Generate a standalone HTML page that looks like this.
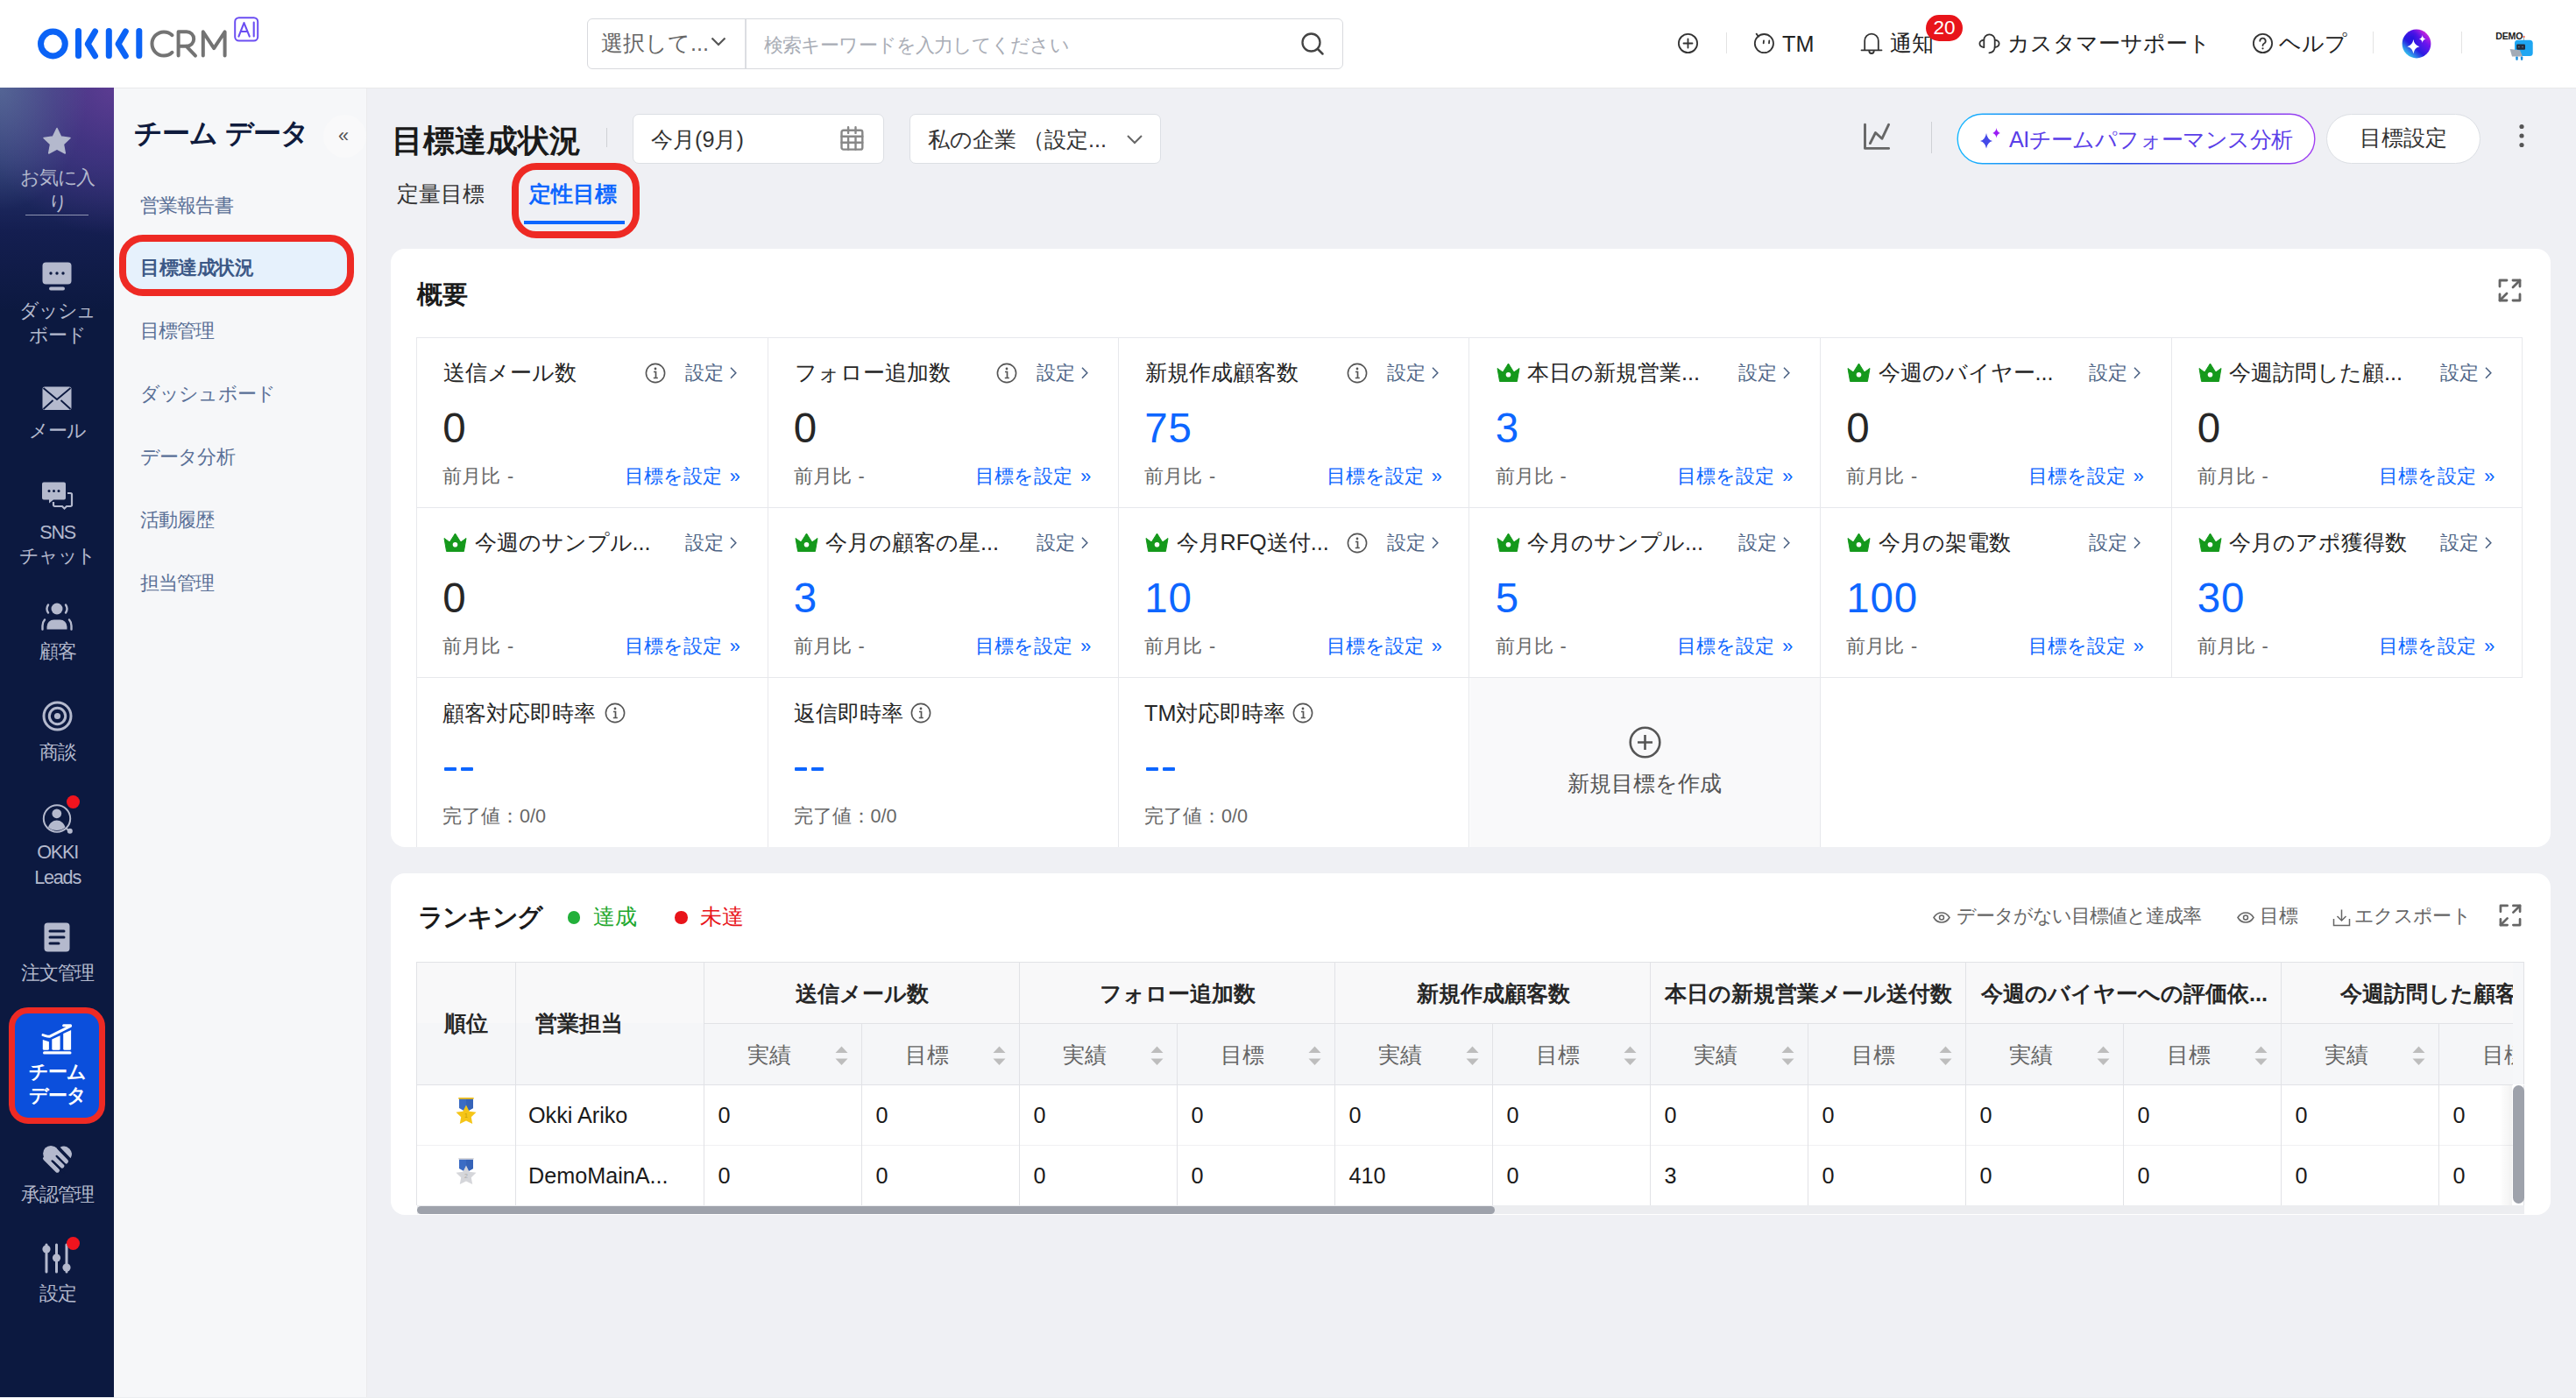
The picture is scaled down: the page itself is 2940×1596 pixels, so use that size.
<!DOCTYPE html><html><head><meta charset="utf-8"><style>
*{box-sizing:border-box;margin:0;padding:0}
html,body{width:2940px;height:1596px;overflow:hidden;background:#eff0f4;font-family:"Liberation Sans",sans-serif;color:#222}
.a{position:absolute;white-space:nowrap}
svg.a{overflow:visible}
</style></head><body>
<div class="a" style="left:0;top:0;width:2940px;height:100px;background:#fff"></div>
<svg class="a" style="left:0;top:0" width="320" height="100" viewBox="0 0 320 100">
<g fill="none" stroke="#0b63f6" stroke-width="7" stroke-linecap="round" stroke-linejoin="round">
<circle cx="60.4" cy="50" r="13.9"/>
<path d="M89.5 35.5v28"/><path d="M108.5 36l-8.3 14.2 8.3 13.6"/>
<path d="M124.3 35.5v28"/><path d="M143.3 36l-8.3 14.2 8.3 13.6"/>
<path d="M158.8 35.5v28"/>
</g>
<g fill="none" stroke="#737373" stroke-width="4" stroke-linecap="round" stroke-linejoin="round">
<path d="M196.5 40.2A13.6 13.6 0 1 0 196.5 59.8"/>
<path d="M203.6 63.6V36.3h9.4a8.2 8.2 0 0 1 0 16.4h-9.4M212.5 52.7l10.5 10.9"/>
<path d="M231.8 63.6V36.3l12.4 18.8 12.4-18.8v27.3"/>
</g>
<rect x="268.2" y="20.2" width="26" height="26.3" rx="4.5" fill="none" stroke="#6b4ef2" stroke-width="2"/>
<path d="M272.4 41.6l6.1-15.5 6.3 15.5M274.6 36h7.8M289.7 25.6v15.8" fill="none" stroke="#6b4ef2" stroke-width="2.1" stroke-linecap="round" stroke-linejoin="round"/>
</svg>
<div class="a" style="left:670px;top:21px;width:863px;height:58px;border:1.5px solid #d8dade;border-radius:6px;background:#fff"></div>
<div class="a" style="left:850px;top:22px;width:1.5px;height:56px;background:#dcdee2"></div>
<div class="a" style="left:686.0px;top:37.0px;font-size:25.2px;line-height:25.2px;color:#666;font-weight:normal;">選択して...</div>
<svg class="a" style="left:810px;top:40px" width="20" height="14" viewBox="0 0 20 14"><path d="M2.5 3.5l7.5 7.5 7.5-7.5" fill="none" stroke="#555" stroke-width="2.2"/></svg>
<div class="a" style="left:872.0px;top:41.0px;font-size:21.6px;line-height:21.6px;color:#a9adb6;font-weight:normal;letter-spacing:-0.9px">検索キーワードを入力してください</div>
<svg class="a" style="left:1484px;top:36px" width="28" height="28" viewBox="0 0 28 28"><circle cx="12.5" cy="12.5" r="10" fill="none" stroke="#444" stroke-width="2.3"/><path d="M20 20l5.5 5.5" stroke="#444" stroke-width="2.5" stroke-linecap="round"/></svg>
<svg class="a" style="left:1914px;top:37px" width="25" height="25" viewBox="0 0 25 25"><circle cx="12.5" cy="12.5" r="10.6" fill="none" stroke="#333" stroke-width="1.8" stroke-linecap="round" stroke-linejoin="round"/><path d="M12.5 7.5v10M7.5 12.5h10" fill="none" stroke="#333" stroke-width="1.8" stroke-linecap="round" stroke-linejoin="round" stroke-width="2"/></svg>
<div class="a" style="left:1970px;top:37px;width:1px;height:24px;background:#e3e3e3"></div>
<svg class="a" style="left:2001px;top:37px" width="25" height="25" viewBox="0 0 25 25"><circle cx="12.4" cy="12.6" r="10.6" fill="none" stroke="#333" stroke-width="1.8" stroke-linecap="round" stroke-linejoin="round"/><path d="M3.6 1.6l2.4 3.2" fill="none" stroke="#333" stroke-width="1.8" stroke-linecap="round" stroke-linejoin="round"/><path d="M12 9.4l-.3 3M18.3 9.4l-.3 3" fill="none" stroke="#333" stroke-width="1.8" stroke-linecap="round" stroke-linejoin="round" stroke-width="2"/></svg>
<div class="a" style="left:2034.0px;top:38.0px;font-size:25.2px;line-height:25.2px;color:#222;font-weight:normal;">TM</div>
<svg class="a" style="left:2123px;top:37px" width="26" height="25" viewBox="0 0 26 25"><path d="M5.2 20V9.4a7.8 7.8 0 0 1 15.6 0V20M1.5 20.3h23M10.3 21.3a2.7 2.7 0 0 0 5.4 0" fill="none" stroke="#333" stroke-width="1.8" stroke-linecap="round" stroke-linejoin="round"/></svg>
<div class="a" style="left:2156.5px;top:37.0px;font-size:25.2px;line-height:25.2px;color:#222;font-weight:normal;">通知</div>
<div class="a" style="left:2198px;top:17px;width:42px;height:30px;border-radius:15px;background:#e8141a;color:#fff;font-size:22.5px;line-height:30px;text-align:center">20</div>
<svg class="a" style="left:2258px;top:37px" width="25" height="25" viewBox="0 0 25 25"><path d="M6.3 17V8.5a6.2 6.2 0 0 1 12.4 0V16c0 4.2-2.4 6.9-6.3 7.3" fill="none" stroke="#333" stroke-width="1.8" stroke-linecap="round" stroke-linejoin="round"/><path d="M6.3 8.6C3.2 9 1.4 10.8 1.4 12.8s1.8 3.9 4.9 4.3" fill="none" stroke="#333" stroke-width="1.8" stroke-linecap="round" stroke-linejoin="round"/><path d="M18.7 8.6c3.1.4 4.9 2.2 4.9 4.2s-1.8 3.9-4.9 4.3" fill="none" stroke="#333" stroke-width="1.8" stroke-linecap="round" stroke-linejoin="round"/></svg>
<div class="a" style="left:2291.0px;top:37.0px;font-size:25.2px;line-height:25.2px;color:#222;font-weight:normal;">カスタマーサポート</div>
<svg class="a" style="left:2570px;top:37px" width="25" height="25" viewBox="0 0 25 25"><circle cx="12.5" cy="12.5" r="10.6" fill="none" stroke="#333" stroke-width="1.8" stroke-linecap="round" stroke-linejoin="round"/><path d="M9.3 9.8a3.2 3.2 0 1 1 4.6 2.9c-1 .5-1.4 1.2-1.4 2.3" fill="none" stroke="#333" stroke-width="1.8" stroke-linecap="round" stroke-linejoin="round"/><circle cx="12.5" cy="18.3" r="1.1" fill="#333"/></svg>
<div class="a" style="left:2601.0px;top:37.0px;font-size:25.2px;line-height:25.2px;color:#222;font-weight:normal;">ヘルプ</div>
<div class="a" style="left:2708px;top:36px;width:1px;height:25px;background:#e3e3e3"></div>
<svg class="a" style="left:2741px;top:33px" width="34" height="34" viewBox="0 0 34 34"><defs>
<linearGradient id="gai" x1="0.15" y1="0.95" x2="0.9" y2="0.1"><stop offset="0" stop-color="#34e0f0"/><stop offset=".38" stop-color="#2a1ee2"/><stop offset=".7" stop-color="#6a14ee"/><stop offset="1" stop-color="#d828d6"/></linearGradient>
<radialGradient id="gai2" cx="0.35" cy="0.3" r="0.4"><stop offset="0" stop-color="#1a10d8" stop-opacity=".7"/><stop offset="1" stop-color="#1a10d8" stop-opacity="0"/></radialGradient></defs>
<circle cx="17" cy="17" r="16.4" fill="url(#gai)"/><circle cx="17" cy="17" r="16.4" fill="url(#gai2)"/>
<path d="M13.4 12.1Q14.3 18.6 20.4 20.2Q14.3 21.8 13.4 28.3Q12.5 21.8 6.4 20.2Q12.5 18.6 13.4 12.1Z" fill="#fff"/>
<path d="M23.7 7Q24.2 10.6 27.5 11.5Q24.2 12.4 23.7 16Q23.2 12.4 19.9 11.5Q23.2 10.6 23.7 7Z" fill="#fff"/>
</svg>
<div class="a" style="left:2809px;top:36px;width:1px;height:25px;background:#e3e3e3"></div>
<svg class="a" style="left:2846px;top:35px" width="48" height="36" viewBox="0 0 48 36">
<text x="2.3" y="10" font-family="Liberation Sans" font-weight="bold" font-size="10.6" letter-spacing="-0.2" fill="#1a1a1a">DEMO</text>
<path d="M34.5 7v4" stroke="#9aa" stroke-width="0.9"/><circle cx="34.5" cy="6.9" r="1.2" fill="#f07050"/>
<rect x="24" y="10.8" width="20.7" height="18.2" rx="3.5" fill="#1ea6f2"/>
<rect x="26.2" y="15.4" width="9.8" height="6.3" rx="1.2" fill="#232b3a"/>
<rect x="28" y="17.8" width="1.6" height="1.4" fill="#6b7686"/><rect x="32.2" y="17.8" width="1.6" height="1.4" fill="#6b7686"/>
<path d="M18.6 21l11.4 1.2 3 7.4H21z" fill="#a3abb6"/>
<rect x="25.3" y="29.4" width="2.4" height="4.4" rx="0.8" fill="#1a8fe0"/><rect x="30.9" y="29.4" width="2.4" height="4.4" rx="0.8" fill="#1a8fe0"/>
</svg>
<div class="a" style="left:0;top:100px;width:130px;height:1496px;background:#0c1940;overflow:hidden"><div style="position:absolute;left:0;top:0;width:130px;height:300px;background:linear-gradient(180deg,#34407c 0%,#26336d 28%,#141e50 55%,rgba(12,25,64,0) 85%)"></div><div style="position:absolute;left:0;top:0;width:130px;height:320px;background:radial-gradient(ellipse 170px 175px at 135px -5px,rgba(96,60,148,.95) 0%,rgba(78,50,138,.65) 45%,rgba(60,40,120,0) 100%)"></div><div style="position:absolute;left:0;top:0;width:130px;height:200px;background:radial-gradient(ellipse 100px 140px at 0px 0px,rgba(95,118,158,.7) 0%,rgba(95,118,158,0) 100%)"></div></div>
<svg class="a" style="left:48px;top:145px" width="34" height="34" viewBox="0 0 34 34"><path d="M17 1.5l4.6 9.6 10.4 1.3-7.6 7.2 1.9 10.4L17 25 7.7 30l1.9-10.4L2 12.4l10.4-1.3z" fill="#b4b9cd" stroke="#b4b9cd" stroke-width="1.5" stroke-linejoin="round"/></svg>
<div class="a" style="left:0;top:192.0px;width:130px;text-align:center;font-size:21.6px;line-height:21.6px;color:#b4b9cd;font-weight:normal;letter-spacing:-1.2px;padding-left:1.2px">お気に入</div>
<div class="a" style="left:0;top:221.0px;width:130px;text-align:center;font-size:21.6px;line-height:21.6px;color:#b4b9cd;font-weight:normal;letter-spacing:-1.2px;padding-left:1.2px">り</div>
<div class="a" style="left:29px;top:245px;width:72px;height:1px;background:rgba(180,185,205,.75)"></div>
<svg class="a" style="left:48px;top:299px" width="34" height="34" viewBox="0 0 34 34"><rect x="0.5" y="0.5" width="33" height="25" rx="4" fill="#b4b9cd"/><rect x="8" y="28.5" width="18" height="4" rx="2" fill="#b4b9cd"/><circle cx="10" cy="13" r="1.7" fill="#0c1940"/><circle cx="17" cy="13" r="1.7" fill="#0c1940"/><circle cx="24" cy="13" r="1.7" fill="#0c1940"/></svg>
<div class="a" style="left:0;top:344.0px;width:130px;text-align:center;font-size:21.6px;line-height:21.6px;color:#b4b9cd;font-weight:normal;letter-spacing:-1.2px;padding-left:1.2px">ダッシュ</div>
<div class="a" style="left:0;top:372.0px;width:130px;text-align:center;font-size:21.6px;line-height:21.6px;color:#b4b9cd;font-weight:normal;letter-spacing:-1.2px;padding-left:1.2px">ボード</div>
<svg class="a" style="left:48px;top:441px" width="34" height="28" viewBox="0 0 34 28"><rect x="0.5" y="0.5" width="33" height="26.5" rx="2.5" fill="#b4b9cd"/><path d="M1.5 2l15.5 13 15.5-13M1.5 26l11-10M32.5 26l-11-10" fill="none" stroke="#0c1940" stroke-width="1.8"/></svg>
<div class="a" style="left:0;top:481.0px;width:130px;text-align:center;font-size:21.6px;line-height:21.6px;color:#b4b9cd;font-weight:normal;letter-spacing:-1.2px;padding-left:1.2px">メール</div>
<svg class="a" style="left:48px;top:550px" width="35" height="32" viewBox="0 0 35 32"><path d="M2 0.5h23a2 2 0 0 1 2 2v16a2 2 0 0 1-2 2H13l-5 4v-4H2a2 2 0 0 1-2-2v-16a2 2 0 0 1 2-2z" fill="#b4b9cd"/><circle cx="8" cy="10.5" r="1.5" fill="#0c1940"/><circle cx="13.5" cy="10.5" r="1.5" fill="#0c1940"/><circle cx="19" cy="10.5" r="1.5" fill="#0c1940"/><path d="M29 13h3.5a1.5 1.5 0 0 1 1.5 1.5v12a1.5 1.5 0 0 1-1.5 1.5H28l-2.5 2.5L23 28h-8.5a1.5 1.5 0 0 1-1.5-1.5V23" fill="none" stroke="#b4b9cd" stroke-width="2.2"/></svg>
<div class="a" style="left:0;top:597.0px;width:130px;text-align:center;font-size:21.6px;line-height:21.6px;color:#b4b9cd;font-weight:normal;letter-spacing:-1.2px;padding-left:1.2px">SNS</div>
<div class="a" style="left:0;top:624.0px;width:130px;text-align:center;font-size:21.6px;line-height:21.6px;color:#b4b9cd;font-weight:normal;letter-spacing:-1.2px;padding-left:1.2px">チャット</div>
<svg class="a" style="left:48px;top:687px" width="34" height="33" viewBox="0 0 34 33"><circle cx="17" cy="8" r="6.5" fill="#b4b9cd"/><path d="M5.5 31.5v-3a8 8 0 0 1 8-8h7a8 8 0 0 1 8 8v3z" fill="#b4b9cd"/><path d="M7 3.5a8 8 0 0 0 0 9M27 3.5a8 8 0 0 1 0 9M3 20.5a10 10 0 0 0-2.5 7v4M31 20.5a10 10 0 0 1 2.5 7v4" fill="none" stroke="#b4b9cd" stroke-width="2.4" stroke-linecap="round"/></svg>
<div class="a" style="left:0;top:732.5px;width:130px;text-align:center;font-size:21.6px;line-height:21.6px;color:#b4b9cd;font-weight:normal;letter-spacing:-1.2px;padding-left:1.2px">顧客</div>
<svg class="a" style="left:48px;top:800px" width="35" height="35" viewBox="0 0 35 35"><circle cx="17.5" cy="17.5" r="15.5" fill="none" stroke="#b4b9cd" stroke-width="3"/><circle cx="17.5" cy="17.5" r="9.2" fill="none" stroke="#b4b9cd" stroke-width="3"/><circle cx="17.5" cy="17.5" r="3.6" fill="#b4b9cd"/></svg>
<div class="a" style="left:0;top:848.0px;width:130px;text-align:center;font-size:21.6px;line-height:21.6px;color:#b4b9cd;font-weight:normal;letter-spacing:-1.2px;padding-left:1.2px">商談</div>
<svg class="a" style="left:47px;top:916px" width="40" height="40" viewBox="0 0 40 40"><circle cx="18" cy="18.5" r="15.2" fill="none" stroke="#b4b9cd" stroke-width="2"/><circle cx="17.8" cy="12.8" r="5.4" fill="#b4b9cd"/><path d="M8 28.5c1.5-5 5.5-8 9.8-8s8.3 3 9.8 8a15.2 15.2 0 0 1-19.6 0z" fill="#b4b9cd"/><path d="M28.5 29.5l3 3" stroke="#b4b9cd" stroke-width="2"/><circle cx="32.8" cy="32.7" r="3" fill="#b4b9cd"/></svg>
<div class="a" style="left:76px;top:908px;width:15px;height:15px;border-radius:50%;background:#f0141e"></div>
<div class="a" style="left:0;top:962.0px;width:130px;text-align:center;font-size:21.6px;line-height:21.6px;color:#b4b9cd;font-weight:normal;letter-spacing:-1.2px;padding-left:1.2px">OKKI</div>
<div class="a" style="left:0;top:991.0px;width:130px;text-align:center;font-size:21.6px;line-height:21.6px;color:#b4b9cd;font-weight:normal;letter-spacing:-1.2px;padding-left:1.2px">Leads</div>
<svg class="a" style="left:50px;top:1053px" width="30" height="34" viewBox="0 0 30 34"><rect x="0.5" y="0.5" width="29" height="33" rx="4" fill="#b4b9cd"/><path d="M7 10h16M7 17h16M7 24h10" stroke="#0c1940" stroke-width="3" stroke-linecap="round"/></svg>
<div class="a" style="left:0;top:1100.0px;width:130px;text-align:center;font-size:21.6px;line-height:21.6px;color:#b4b9cd;font-weight:normal;letter-spacing:-1.2px;padding-left:1.2px">注文管理</div>
<div class="a" style="left:10px;top:1150px;width:110px;height:133px;border:7.5px solid #ee2a24;border-radius:22px;background:#0b4fdc"></div>
<svg class="a" style="left:47px;top:1169px" width="36" height="36" viewBox="0 0 36 36"><rect x="2" y="31.3" width="32.5" height="3.2" rx="1.6" fill="#fff"/><path d="M1.8 18L8.9 20.3V28.3a1.5 1.5 0 0 1-1.5 1.5H3.3a1.5 1.5 0 0 1-1.5-1.5z" fill="#fff"/><path d="M12.3 17.5L21.6 13.2V28.3a1.5 1.5 0 0 1-1.5 1.5H13.8a1.5 1.5 0 0 1-1.5-1.5z" fill="#fff"/><path d="M25.2 11L34.1 7V28.3a1.5 1.5 0 0 1-1.5 1.5H26.7a1.5 1.5 0 0 1-1.5-1.5z" fill="#fff"/><path d="M2 12.6C4.5 13.2 7.5 14.8 10 14.2L33.6 2.3M25.6 1.7H33.6" fill="none" stroke="#fff" stroke-width="3" stroke-linecap="round" stroke-linejoin="round"/></svg>
<div class="a" style="left:0;top:1213.0px;width:130px;text-align:center;font-size:21.6px;line-height:21.6px;color:#fff;font-weight:bold;letter-spacing:-1.2px;padding-left:1.2px">チーム</div>
<div class="a" style="left:0;top:1240.0px;width:130px;text-align:center;font-size:21.6px;line-height:21.6px;color:#fff;font-weight:bold;letter-spacing:-1.2px;padding-left:1.2px">データ</div>
<svg class="a" style="left:40px;top:1300px" width="50" height="45" viewBox="0 0 50 45"><circle cx="18" cy="16.9" r="8.9" fill="#b4b9cd"/><path d="M11.6 22.5L25.4 36.1M16.8 17.3L30.9 30.9M22 12.1L35.4 25.9" stroke="#b4b9cd" stroke-width="5.2" stroke-linecap="round"/><path d="M19.6 25.3L33 38.7M24.6 19.9L38 33.3" stroke="#0c1940" stroke-width="2.2" stroke-linecap="round"/><path d="M28.6 9.8A9 9 0 0 1 40.6 22.2Z" fill="#b4b9cd"/></svg>
<div class="a" style="left:0;top:1352.5px;width:130px;text-align:center;font-size:21.6px;line-height:21.6px;color:#b4b9cd;font-weight:normal;letter-spacing:-1.2px;padding-left:1.2px">承認管理</div>
<svg class="a" style="left:47px;top:1418px" width="34" height="37" viewBox="0 0 34 37"><path d="M6 3v31M17.5 3v31M29 3v31" stroke="#b4b9cd" stroke-width="3" stroke-linecap="round"/><circle cx="6" cy="8" r="4.6" fill="#b4b9cd"/><circle cx="17.5" cy="18" r="4.6" fill="#b4b9cd"/><circle cx="29" cy="29" r="4.6" fill="#b4b9cd"/></svg>
<div class="a" style="left:76px;top:1412px;width:15px;height:15px;border-radius:50%;background:#f0141e"></div>
<div class="a" style="left:0;top:1465.5px;width:130px;text-align:center;font-size:21.6px;line-height:21.6px;color:#b4b9cd;font-weight:normal;letter-spacing:-1.2px;padding-left:1.2px">設定</div>
<div class="a" style="left:130px;top:100px;width:289px;height:1496px;background:#f6f7f9;border-right:1px solid #ebebec"></div>
<div class="a" style="left:152.5px;top:136.0px;font-size:32.4px;line-height:32.4px;color:#0f1b3d;font-weight:bold;letter-spacing:-0.7px">チーム データ</div>
<div class="a" style="left:369px;top:131px;width:49px;height:49px;border-radius:50%;background:#f9f9fa"></div>
<div class="a" style="left:386.0px;top:143.0px;font-size:21.6px;line-height:21.6px;color:#555;font-weight:normal;line-height:24px">«</div>
<div class="a" style="left:136px;top:268px;width:267.5px;height:70px;border:8px solid #ee2a24;border-radius:27px;background:#e6f1fc"></div>
<div class="a" style="left:160.0px;top:223.6px;font-size:21.6px;line-height:21.6px;color:#5a7097;font-weight:normal;letter-spacing:-0.85px">営業報告書</div>
<div class="a" style="left:160.0px;top:295.2px;font-size:21.6px;line-height:21.6px;color:#3c5886;font-weight:bold;letter-spacing:-0.5px">目標達成状況</div>
<div class="a" style="left:160.0px;top:367.2px;font-size:21.6px;line-height:21.6px;color:#5a7097;font-weight:normal;letter-spacing:-0.85px">目標管理</div>
<div class="a" style="left:160.0px;top:439.2px;font-size:21.6px;line-height:21.6px;color:#5a7097;font-weight:normal;letter-spacing:-0.85px">ダッシュボード</div>
<div class="a" style="left:160.0px;top:511.2px;font-size:21.6px;line-height:21.6px;color:#5a7097;font-weight:normal;letter-spacing:-0.85px">データ分析</div>
<div class="a" style="left:160.0px;top:583.2px;font-size:21.6px;line-height:21.6px;color:#5a7097;font-weight:normal;letter-spacing:-0.85px">活動履歴</div>
<div class="a" style="left:160.0px;top:655.2px;font-size:21.6px;line-height:21.6px;color:#5a7097;font-weight:normal;letter-spacing:-0.85px">担当管理</div>
<div class="a" style="left:446.5px;top:142.5px;font-size:36px;line-height:36px;color:#1a1a1a;font-weight:bold;">目標達成状況</div>
<div class="a" style="left:692px;top:146px;width:1px;height:22px;background:#cfd1d5"></div>
<div class="a" style="left:721.5px;top:130px;width:287px;height:56.5px;border:1.5px solid #dcdfe4;border-radius:7px;background:#fff"></div>
<div class="a" style="left:743.0px;top:147.0px;font-size:25.2px;line-height:25.2px;color:#333;font-weight:normal;">今月(9月)</div>
<svg class="a" style="left:957px;top:144px" width="29" height="29" viewBox="0 0 29 29"><rect x="3.5" y="4.7" width="23.8" height="21.9" rx="2.2" fill="none" stroke="#888" stroke-width="2.4"/><path d="M3.5 11.7h23.8M3.5 18.8h23.8M11.1 11.7v14.9M19.5 11.7v14.9M11.1 1.2v6.7M19.5 1.2v6.7" stroke="#888" stroke-width="2.4" stroke-linecap="round"/></svg>
<div class="a" style="left:1038px;top:130px;width:287px;height:56.5px;border:1.5px solid #dcdfe4;border-radius:7px;background:#fff"></div>
<div class="a" style="left:1059.0px;top:147.0px;font-size:25.2px;line-height:25.2px;color:#333;font-weight:normal;">私の企業 （設定...</div>
<svg class="a" style="left:1285px;top:152px" width="20" height="14" viewBox="0 0 20 14"><path d="M2 3l8 8 8-8" fill="none" stroke="#666" stroke-width="2"/></svg>
<div class="a" style="left:453.0px;top:209.0px;font-size:25.2px;line-height:25.2px;color:#333;font-weight:normal;">定量目標</div>
<div class="a" style="left:604.0px;top:208.5px;font-size:25.2px;line-height:25.2px;color:#0d66ff;font-weight:bold;">定性目標</div>
<div class="a" style="left:598px;top:252px;width:115px;height:4px;background:#0d66ff"></div>
<div class="a" style="left:584px;top:186px;width:146px;height:86px;border:8px solid #ee2a24;border-radius:28px"></div>
<svg class="a" style="left:2126px;top:140px" width="32" height="32" viewBox="0 0 32 32"><g fill="none" stroke="#666" stroke-width="2.9" stroke-linecap="round" stroke-linejoin="round"><path d="M2.5 2.2V29.4H29.6"/><path d="M8.4 23.6L14.5 11.5L21.9 18.3L29.6 2.2"/></g></svg>
<div class="a" style="left:2204px;top:139px;width:1px;height:36px;background:#cfd1d5"></div>
<svg class="a" style="left:2233px;top:129px" width="410" height="59" viewBox="0 0 410 59"><defs><linearGradient id="gb" x1="0" y1="0" x2="1" y2="0"><stop offset="0" stop-color="#18b8ff"/><stop offset=".45" stop-color="#1f48e6"/><stop offset="1" stop-color="#a23ff2"/></linearGradient></defs>
<rect x="1.2" y="1.2" width="407.6" height="56.6" rx="28.3" fill="#fff" stroke="url(#gb)" stroke-width="1.4"/>
<path d="M34 23Q35.2 30.5 41 32Q35.2 33.5 34 40.6Q32.8 33.5 27 32Q32.8 30.5 34 23Z" fill="#4449e8"/>
<path d="M45.5 17Q46 21.6 49.8 23Q46 24.4 45.5 28.5Q45 24.4 41.2 23Q45 21.6 45.5 17Z" fill="#9b1cf5"/>
</svg>
<div class="a" style="left:2293.0px;top:147.0px;font-size:25.2px;line-height:25.2px;color:#5a3ee8;font-weight:normal;letter-spacing:-0.6px">AIチームパフォーマンス分析</div>
<div class="a" style="left:2655px;top:130px;width:176px;height:57px;border:1.5px solid #dcdfe4;border-radius:29px;background:#fff"></div>
<div class="a" style="left:2693.0px;top:145.0px;font-size:25.2px;line-height:25.2px;color:#333;font-weight:normal;">目標設定</div>
<svg class="a" style="left:2873px;top:141px" width="10" height="28" viewBox="0 0 10 28"><circle cx="5" cy="3.5" r="2.6" fill="#555"/><circle cx="5" cy="14" r="2.6" fill="#555"/><circle cx="5" cy="24.5" r="2.6" fill="#555"/></svg>
<div class="a" style="left:446px;top:284px;width:2465px;height:683px;background:#fff;border-radius:16px"></div>
<div class="a" style="left:476.0px;top:322.0px;font-size:28.8px;line-height:28.8px;color:#1a1a1a;font-weight:bold;">概要</div>
<svg class="a" style="left:2851px;top:318px" width="27" height="27" viewBox="0 0 27 27"><g fill="none" stroke="#666" stroke-width="2.8" stroke-linecap="round" stroke-linejoin="round"><path d="M2 9V2h8M17 2h8v7M25 18v7h-8M10 25H2v-7"/><path d="M25 2l-8 8M2 25l8-8"/></g></svg>
<div class="a" style="left:475px;top:385px;width:2404.0px;height:389px;border:1px solid #e7e8ec"></div>
<div class="a" style="left:876px;top:385px;width:1px;height:582px;background:#e7e8ec"></div>
<div class="a" style="left:1276px;top:385px;width:1px;height:582px;background:#e7e8ec"></div>
<div class="a" style="left:1676px;top:385px;width:1px;height:582px;background:#e7e8ec"></div>
<div class="a" style="left:2077px;top:385px;width:1px;height:582px;background:#e7e8ec"></div>
<div class="a" style="left:2478px;top:385px;width:1px;height:388px;background:#e7e8ec"></div>
<div class="a" style="left:475px;top:579px;width:2403.0px;height:1px;background:#e7e8ec"></div>
<div class="a" style="left:475px;top:773px;width:1px;height:194px;background:#e7e8ec"></div>
<div class="a" style="left:1677.5px;top:774px;width:399.5px;height:193px;background:#f9f9fa"></div>
<div class="a" style="left:2077.0px;top:774px;width:1px;height:193px;background:#e7e8ec"></div>
<div class="a" style="left:506.0px;top:412.5px;font-size:25.2px;line-height:25.2px;color:#262626;font-weight:normal;">送信メール数</div>
<svg class="a" style="left:736.0px;top:413.5px" width="24" height="24" viewBox="0 0 24 24"><circle cx="12" cy="12" r="10.6" fill="none" stroke="#555" stroke-width="1.6"/><circle cx="12" cy="7" r="1.4" fill="#555"/><path d="M10 10.5h2.5v7M9.8 17.5h5" fill="none" stroke="#555" stroke-width="1.7"/></svg>
<div class="a" style="left:782.0px;top:415.0px;font-size:21.6px;line-height:21.6px;color:#4e6485;font-weight:normal;">設定</div>
<svg class="a" style="left:832.0px;top:418.0px" width="10" height="16" viewBox="0 0 10 16"><path d="M2 1.8l5.8 6-5.8 6" fill="none" stroke="#4e6485" stroke-width="1.6"/></svg>
<div class="a" style="left:505.3px;top:465.0px;font-size:47.5px;line-height:47.5px;color:#262626;font-weight:normal;letter-spacing:0.8px">0</div>
<div class="a" style="left:505.0px;top:533.0px;font-size:21.6px;line-height:21.6px;color:#666;font-weight:normal;">前月比 <span style="margin-left:2px">-</span></div>
<div class="a" style="left:712.8px;top:533.0px;font-size:21.6px;line-height:21.6px;color:#0d66ff;font-weight:normal;">目標を設定 <span style="margin-left:3px">»</span></div>
<div class="a" style="left:906.5px;top:412.5px;font-size:25.2px;line-height:25.2px;color:#262626;font-weight:normal;">フォロー追加数</div>
<svg class="a" style="left:1136.5px;top:413.5px" width="24" height="24" viewBox="0 0 24 24"><circle cx="12" cy="12" r="10.6" fill="none" stroke="#555" stroke-width="1.6"/><circle cx="12" cy="7" r="1.4" fill="#555"/><path d="M10 10.5h2.5v7M9.8 17.5h5" fill="none" stroke="#555" stroke-width="1.7"/></svg>
<div class="a" style="left:1182.5px;top:415.0px;font-size:21.6px;line-height:21.6px;color:#4e6485;font-weight:normal;">設定</div>
<svg class="a" style="left:1232.5px;top:418.0px" width="10" height="16" viewBox="0 0 10 16"><path d="M2 1.8l5.8 6-5.8 6" fill="none" stroke="#4e6485" stroke-width="1.6"/></svg>
<div class="a" style="left:905.8px;top:465.0px;font-size:47.5px;line-height:47.5px;color:#262626;font-weight:normal;letter-spacing:0.8px">0</div>
<div class="a" style="left:905.5px;top:533.0px;font-size:21.6px;line-height:21.6px;color:#666;font-weight:normal;">前月比 <span style="margin-left:2px">-</span></div>
<div class="a" style="left:1113.3px;top:533.0px;font-size:21.6px;line-height:21.6px;color:#0d66ff;font-weight:normal;">目標を設定 <span style="margin-left:3px">»</span></div>
<div class="a" style="left:1307.0px;top:412.5px;font-size:25.2px;line-height:25.2px;color:#262626;font-weight:normal;">新規作成顧客数</div>
<svg class="a" style="left:1537.0px;top:413.5px" width="24" height="24" viewBox="0 0 24 24"><circle cx="12" cy="12" r="10.6" fill="none" stroke="#555" stroke-width="1.6"/><circle cx="12" cy="7" r="1.4" fill="#555"/><path d="M10 10.5h2.5v7M9.8 17.5h5" fill="none" stroke="#555" stroke-width="1.7"/></svg>
<div class="a" style="left:1583.0px;top:415.0px;font-size:21.6px;line-height:21.6px;color:#4e6485;font-weight:normal;">設定</div>
<svg class="a" style="left:1633.0px;top:418.0px" width="10" height="16" viewBox="0 0 10 16"><path d="M2 1.8l5.8 6-5.8 6" fill="none" stroke="#4e6485" stroke-width="1.6"/></svg>
<div class="a" style="left:1306.3px;top:465.0px;font-size:47.5px;line-height:47.5px;color:#0d66ff;font-weight:normal;letter-spacing:0.8px">75</div>
<div class="a" style="left:1306.0px;top:533.0px;font-size:21.6px;line-height:21.6px;color:#666;font-weight:normal;">前月比 <span style="margin-left:2px">-</span></div>
<div class="a" style="left:1513.8px;top:533.0px;font-size:21.6px;line-height:21.6px;color:#0d66ff;font-weight:normal;">目標を設定 <span style="margin-left:3px">»</span></div>
<svg class="a" style="left:1707.5px;top:413.8px" width="27" height="22" viewBox="0 0 27 22"><path d="M1 6.5l6.2 4.5L13.5 1l6.3 10 6.2-4.5-2.6 15H3.6z" fill="#15991c" stroke="#15991c" stroke-width="1" stroke-linejoin="round"/><circle cx="13.5" cy="13.8" r="2.8" fill="#fff"/></svg>
<div class="a" style="left:1743.0px;top:412.5px;font-size:25.2px;line-height:25.2px;color:#262626;font-weight:normal;">本日の新規営業...</div>
<div class="a" style="left:1983.5px;top:415.0px;font-size:21.6px;line-height:21.6px;color:#4e6485;font-weight:normal;">設定</div>
<svg class="a" style="left:2033.5px;top:418.0px" width="10" height="16" viewBox="0 0 10 16"><path d="M2 1.8l5.8 6-5.8 6" fill="none" stroke="#4e6485" stroke-width="1.6"/></svg>
<div class="a" style="left:1706.8px;top:465.0px;font-size:47.5px;line-height:47.5px;color:#0d66ff;font-weight:normal;letter-spacing:0.8px">3</div>
<div class="a" style="left:1706.5px;top:533.0px;font-size:21.6px;line-height:21.6px;color:#666;font-weight:normal;">前月比 <span style="margin-left:2px">-</span></div>
<div class="a" style="left:1914.3px;top:533.0px;font-size:21.6px;line-height:21.6px;color:#0d66ff;font-weight:normal;">目標を設定 <span style="margin-left:3px">»</span></div>
<svg class="a" style="left:2108.0px;top:413.8px" width="27" height="22" viewBox="0 0 27 22"><path d="M1 6.5l6.2 4.5L13.5 1l6.3 10 6.2-4.5-2.6 15H3.6z" fill="#15991c" stroke="#15991c" stroke-width="1" stroke-linejoin="round"/><circle cx="13.5" cy="13.8" r="2.8" fill="#fff"/></svg>
<div class="a" style="left:2143.5px;top:412.5px;font-size:25.2px;line-height:25.2px;color:#262626;font-weight:normal;">今週のバイヤー...</div>
<div class="a" style="left:2384.0px;top:415.0px;font-size:21.6px;line-height:21.6px;color:#4e6485;font-weight:normal;">設定</div>
<svg class="a" style="left:2434.0px;top:418.0px" width="10" height="16" viewBox="0 0 10 16"><path d="M2 1.8l5.8 6-5.8 6" fill="none" stroke="#4e6485" stroke-width="1.6"/></svg>
<div class="a" style="left:2107.3px;top:465.0px;font-size:47.5px;line-height:47.5px;color:#262626;font-weight:normal;letter-spacing:0.8px">0</div>
<div class="a" style="left:2107.0px;top:533.0px;font-size:21.6px;line-height:21.6px;color:#666;font-weight:normal;">前月比 <span style="margin-left:2px">-</span></div>
<div class="a" style="left:2314.8px;top:533.0px;font-size:21.6px;line-height:21.6px;color:#0d66ff;font-weight:normal;">目標を設定 <span style="margin-left:3px">»</span></div>
<svg class="a" style="left:2508.5px;top:413.8px" width="27" height="22" viewBox="0 0 27 22"><path d="M1 6.5l6.2 4.5L13.5 1l6.3 10 6.2-4.5-2.6 15H3.6z" fill="#15991c" stroke="#15991c" stroke-width="1" stroke-linejoin="round"/><circle cx="13.5" cy="13.8" r="2.8" fill="#fff"/></svg>
<div class="a" style="left:2544.0px;top:412.5px;font-size:25.2px;line-height:25.2px;color:#262626;font-weight:normal;">今週訪問した顧...</div>
<div class="a" style="left:2784.5px;top:415.0px;font-size:21.6px;line-height:21.6px;color:#4e6485;font-weight:normal;">設定</div>
<svg class="a" style="left:2834.5px;top:418.0px" width="10" height="16" viewBox="0 0 10 16"><path d="M2 1.8l5.8 6-5.8 6" fill="none" stroke="#4e6485" stroke-width="1.6"/></svg>
<div class="a" style="left:2507.8px;top:465.0px;font-size:47.5px;line-height:47.5px;color:#262626;font-weight:normal;letter-spacing:0.8px">0</div>
<div class="a" style="left:2507.5px;top:533.0px;font-size:21.6px;line-height:21.6px;color:#666;font-weight:normal;">前月比 <span style="margin-left:2px">-</span></div>
<div class="a" style="left:2715.3px;top:533.0px;font-size:21.6px;line-height:21.6px;color:#0d66ff;font-weight:normal;">目標を設定 <span style="margin-left:3px">»</span></div>
<svg class="a" style="left:506.0px;top:607.8px" width="27" height="22" viewBox="0 0 27 22"><path d="M1 6.5l6.2 4.5L13.5 1l6.3 10 6.2-4.5-2.6 15H3.6z" fill="#15991c" stroke="#15991c" stroke-width="1" stroke-linejoin="round"/><circle cx="13.5" cy="13.8" r="2.8" fill="#fff"/></svg>
<div class="a" style="left:541.5px;top:606.5px;font-size:25.2px;line-height:25.2px;color:#262626;font-weight:normal;">今週のサンプル...</div>
<div class="a" style="left:782.0px;top:609.0px;font-size:21.6px;line-height:21.6px;color:#4e6485;font-weight:normal;">設定</div>
<svg class="a" style="left:832.0px;top:612.0px" width="10" height="16" viewBox="0 0 10 16"><path d="M2 1.8l5.8 6-5.8 6" fill="none" stroke="#4e6485" stroke-width="1.6"/></svg>
<div class="a" style="left:505.3px;top:659.0px;font-size:47.5px;line-height:47.5px;color:#262626;font-weight:normal;letter-spacing:0.8px">0</div>
<div class="a" style="left:505.0px;top:727.0px;font-size:21.6px;line-height:21.6px;color:#666;font-weight:normal;">前月比 <span style="margin-left:2px">-</span></div>
<div class="a" style="left:712.8px;top:727.0px;font-size:21.6px;line-height:21.6px;color:#0d66ff;font-weight:normal;">目標を設定 <span style="margin-left:3px">»</span></div>
<svg class="a" style="left:906.5px;top:607.8px" width="27" height="22" viewBox="0 0 27 22"><path d="M1 6.5l6.2 4.5L13.5 1l6.3 10 6.2-4.5-2.6 15H3.6z" fill="#15991c" stroke="#15991c" stroke-width="1" stroke-linejoin="round"/><circle cx="13.5" cy="13.8" r="2.8" fill="#fff"/></svg>
<div class="a" style="left:942.0px;top:606.5px;font-size:25.2px;line-height:25.2px;color:#262626;font-weight:normal;">今月の顧客の星...</div>
<div class="a" style="left:1182.5px;top:609.0px;font-size:21.6px;line-height:21.6px;color:#4e6485;font-weight:normal;">設定</div>
<svg class="a" style="left:1232.5px;top:612.0px" width="10" height="16" viewBox="0 0 10 16"><path d="M2 1.8l5.8 6-5.8 6" fill="none" stroke="#4e6485" stroke-width="1.6"/></svg>
<div class="a" style="left:905.8px;top:659.0px;font-size:47.5px;line-height:47.5px;color:#0d66ff;font-weight:normal;letter-spacing:0.8px">3</div>
<div class="a" style="left:905.5px;top:727.0px;font-size:21.6px;line-height:21.6px;color:#666;font-weight:normal;">前月比 <span style="margin-left:2px">-</span></div>
<div class="a" style="left:1113.3px;top:727.0px;font-size:21.6px;line-height:21.6px;color:#0d66ff;font-weight:normal;">目標を設定 <span style="margin-left:3px">»</span></div>
<svg class="a" style="left:1307.0px;top:607.8px" width="27" height="22" viewBox="0 0 27 22"><path d="M1 6.5l6.2 4.5L13.5 1l6.3 10 6.2-4.5-2.6 15H3.6z" fill="#15991c" stroke="#15991c" stroke-width="1" stroke-linejoin="round"/><circle cx="13.5" cy="13.8" r="2.8" fill="#fff"/></svg>
<div class="a" style="left:1342.5px;top:606.5px;font-size:25.2px;line-height:25.2px;color:#262626;font-weight:normal;">今月RFQ送付...</div>
<svg class="a" style="left:1537.0px;top:607.5px" width="24" height="24" viewBox="0 0 24 24"><circle cx="12" cy="12" r="10.6" fill="none" stroke="#555" stroke-width="1.6"/><circle cx="12" cy="7" r="1.4" fill="#555"/><path d="M10 10.5h2.5v7M9.8 17.5h5" fill="none" stroke="#555" stroke-width="1.7"/></svg>
<div class="a" style="left:1583.0px;top:609.0px;font-size:21.6px;line-height:21.6px;color:#4e6485;font-weight:normal;">設定</div>
<svg class="a" style="left:1633.0px;top:612.0px" width="10" height="16" viewBox="0 0 10 16"><path d="M2 1.8l5.8 6-5.8 6" fill="none" stroke="#4e6485" stroke-width="1.6"/></svg>
<div class="a" style="left:1306.3px;top:659.0px;font-size:47.5px;line-height:47.5px;color:#0d66ff;font-weight:normal;letter-spacing:0.8px">10</div>
<div class="a" style="left:1306.0px;top:727.0px;font-size:21.6px;line-height:21.6px;color:#666;font-weight:normal;">前月比 <span style="margin-left:2px">-</span></div>
<div class="a" style="left:1513.8px;top:727.0px;font-size:21.6px;line-height:21.6px;color:#0d66ff;font-weight:normal;">目標を設定 <span style="margin-left:3px">»</span></div>
<svg class="a" style="left:1707.5px;top:607.8px" width="27" height="22" viewBox="0 0 27 22"><path d="M1 6.5l6.2 4.5L13.5 1l6.3 10 6.2-4.5-2.6 15H3.6z" fill="#15991c" stroke="#15991c" stroke-width="1" stroke-linejoin="round"/><circle cx="13.5" cy="13.8" r="2.8" fill="#fff"/></svg>
<div class="a" style="left:1743.0px;top:606.5px;font-size:25.2px;line-height:25.2px;color:#262626;font-weight:normal;">今月のサンプル...</div>
<div class="a" style="left:1983.5px;top:609.0px;font-size:21.6px;line-height:21.6px;color:#4e6485;font-weight:normal;">設定</div>
<svg class="a" style="left:2033.5px;top:612.0px" width="10" height="16" viewBox="0 0 10 16"><path d="M2 1.8l5.8 6-5.8 6" fill="none" stroke="#4e6485" stroke-width="1.6"/></svg>
<div class="a" style="left:1706.8px;top:659.0px;font-size:47.5px;line-height:47.5px;color:#0d66ff;font-weight:normal;letter-spacing:0.8px">5</div>
<div class="a" style="left:1706.5px;top:727.0px;font-size:21.6px;line-height:21.6px;color:#666;font-weight:normal;">前月比 <span style="margin-left:2px">-</span></div>
<div class="a" style="left:1914.3px;top:727.0px;font-size:21.6px;line-height:21.6px;color:#0d66ff;font-weight:normal;">目標を設定 <span style="margin-left:3px">»</span></div>
<svg class="a" style="left:2108.0px;top:607.8px" width="27" height="22" viewBox="0 0 27 22"><path d="M1 6.5l6.2 4.5L13.5 1l6.3 10 6.2-4.5-2.6 15H3.6z" fill="#15991c" stroke="#15991c" stroke-width="1" stroke-linejoin="round"/><circle cx="13.5" cy="13.8" r="2.8" fill="#fff"/></svg>
<div class="a" style="left:2143.5px;top:606.5px;font-size:25.2px;line-height:25.2px;color:#262626;font-weight:normal;">今月の架電数</div>
<div class="a" style="left:2384.0px;top:609.0px;font-size:21.6px;line-height:21.6px;color:#4e6485;font-weight:normal;">設定</div>
<svg class="a" style="left:2434.0px;top:612.0px" width="10" height="16" viewBox="0 0 10 16"><path d="M2 1.8l5.8 6-5.8 6" fill="none" stroke="#4e6485" stroke-width="1.6"/></svg>
<div class="a" style="left:2107.3px;top:659.0px;font-size:47.5px;line-height:47.5px;color:#0d66ff;font-weight:normal;letter-spacing:0.8px">100</div>
<div class="a" style="left:2107.0px;top:727.0px;font-size:21.6px;line-height:21.6px;color:#666;font-weight:normal;">前月比 <span style="margin-left:2px">-</span></div>
<div class="a" style="left:2314.8px;top:727.0px;font-size:21.6px;line-height:21.6px;color:#0d66ff;font-weight:normal;">目標を設定 <span style="margin-left:3px">»</span></div>
<svg class="a" style="left:2508.5px;top:607.8px" width="27" height="22" viewBox="0 0 27 22"><path d="M1 6.5l6.2 4.5L13.5 1l6.3 10 6.2-4.5-2.6 15H3.6z" fill="#15991c" stroke="#15991c" stroke-width="1" stroke-linejoin="round"/><circle cx="13.5" cy="13.8" r="2.8" fill="#fff"/></svg>
<div class="a" style="left:2544.0px;top:606.5px;font-size:25.2px;line-height:25.2px;color:#262626;font-weight:normal;">今月のアポ獲得数</div>
<div class="a" style="left:2784.5px;top:609.0px;font-size:21.6px;line-height:21.6px;color:#4e6485;font-weight:normal;">設定</div>
<svg class="a" style="left:2834.5px;top:612.0px" width="10" height="16" viewBox="0 0 10 16"><path d="M2 1.8l5.8 6-5.8 6" fill="none" stroke="#4e6485" stroke-width="1.6"/></svg>
<div class="a" style="left:2507.8px;top:659.0px;font-size:47.5px;line-height:47.5px;color:#0d66ff;font-weight:normal;letter-spacing:0.8px">30</div>
<div class="a" style="left:2507.5px;top:727.0px;font-size:21.6px;line-height:21.6px;color:#666;font-weight:normal;">前月比 <span style="margin-left:2px">-</span></div>
<div class="a" style="left:2715.3px;top:727.0px;font-size:21.6px;line-height:21.6px;color:#0d66ff;font-weight:normal;">目標を設定 <span style="margin-left:3px">»</span></div>
<div class="a" style="left:505.0px;top:801.5px;font-size:25.2px;line-height:25.2px;color:#262626;font-weight:normal;">顧客対応即時率</div>
<span class="a" id="r3t0" style="display:none"></span>
<div class="a" style="left:506.8px;top:875.8px;width:14px;height:4px;border-radius:1px;background:#0d66ff"></div>
<div class="a" style="left:525.8px;top:875.8px;width:14px;height:4px;border-radius:1px;background:#0d66ff"></div>
<div class="a" style="left:505.0px;top:920.5px;font-size:21.6px;line-height:21.6px;color:#666;font-weight:normal;">完了値：0/0</div>
<div class="a" style="left:905.5px;top:801.5px;font-size:25.2px;line-height:25.2px;color:#262626;font-weight:normal;">返信即時率</div>
<span class="a" id="r3t1" style="display:none"></span>
<div class="a" style="left:907.3px;top:875.8px;width:14px;height:4px;border-radius:1px;background:#0d66ff"></div>
<div class="a" style="left:926.3px;top:875.8px;width:14px;height:4px;border-radius:1px;background:#0d66ff"></div>
<div class="a" style="left:905.5px;top:920.5px;font-size:21.6px;line-height:21.6px;color:#666;font-weight:normal;">完了値：0/0</div>
<div class="a" style="left:1306.0px;top:801.5px;font-size:25.2px;line-height:25.2px;color:#262626;font-weight:normal;">TM対応即時率</div>
<span class="a" id="r3t2" style="display:none"></span>
<div class="a" style="left:1307.8px;top:875.8px;width:14px;height:4px;border-radius:1px;background:#0d66ff"></div>
<div class="a" style="left:1326.8px;top:875.8px;width:14px;height:4px;border-radius:1px;background:#0d66ff"></div>
<div class="a" style="left:1306.0px;top:920.5px;font-size:21.6px;line-height:21.6px;color:#666;font-weight:normal;">完了値：0/0</div>
<svg class="a" style="left:689.5px;top:802.0px" width="24" height="24" viewBox="0 0 24 24"><circle cx="12" cy="12" r="10.6" fill="none" stroke="#555" stroke-width="1.6"/><circle cx="12" cy="7" r="1.4" fill="#555"/><path d="M10 10.5h2.5v7M9.8 17.5h5" fill="none" stroke="#555" stroke-width="1.7"/></svg>
<svg class="a" style="left:1038.5px;top:802.0px" width="24" height="24" viewBox="0 0 24 24"><circle cx="12" cy="12" r="10.6" fill="none" stroke="#555" stroke-width="1.6"/><circle cx="12" cy="7" r="1.4" fill="#555"/><path d="M10 10.5h2.5v7M9.8 17.5h5" fill="none" stroke="#555" stroke-width="1.7"/></svg>
<svg class="a" style="left:1475.0px;top:802.0px" width="24" height="24" viewBox="0 0 24 24"><circle cx="12" cy="12" r="10.6" fill="none" stroke="#555" stroke-width="1.6"/><circle cx="12" cy="7" r="1.4" fill="#555"/><path d="M10 10.5h2.5v7M9.8 17.5h5" fill="none" stroke="#555" stroke-width="1.7"/></svg>
<svg class="a" style="left:1859px;top:829px" width="37" height="37" viewBox="0 0 37 37"><circle cx="18.5" cy="18.5" r="16.8" fill="none" stroke="#555" stroke-width="2.6"/><path d="M18.5 10v17M10 18.5h17" stroke="#555" stroke-width="2.6"/></svg>
<div class="a" style="left:1789.0px;top:882.0px;font-size:25.2px;line-height:25.2px;color:#555;font-weight:normal;">新規目標を作成</div>
<div class="a" style="left:446px;top:997px;width:2465px;height:390px;background:#fff;border-radius:16px"></div>
<div class="a" style="left:477.0px;top:1032.5px;font-size:28.8px;line-height:28.8px;color:#1a1a1a;font-weight:bold;letter-spacing:-1.8px">ランキング</div>
<div class="a" style="left:647.5px;top:1040.3px;width:14.5px;height:14.5px;border-radius:50%;background:#22b03a"></div>
<div class="a" style="left:676.5px;top:1034.0px;font-size:25.2px;line-height:25.2px;color:#1fa82e;font-weight:normal;">達成</div>
<div class="a" style="left:770px;top:1040.3px;width:14.5px;height:14.5px;border-radius:50%;background:#e8141a"></div>
<div class="a" style="left:798.5px;top:1034.0px;font-size:25.2px;line-height:25.2px;color:#e8141a;font-weight:normal;">未達</div>
<svg class="a" style="left:2205px;top:1039px" width="22" height="17" viewBox="0 0 22 17"><path d="M2 8.5C4.2 4.8 7.2 3 11 3s6.8 1.8 9 5.5C17.8 12.2 14.8 14 11 14S4.2 12.2 2 8.5z" fill="none" stroke="#666" stroke-width="1.5"/><circle cx="11" cy="8.5" r="2.5" fill="none" stroke="#666" stroke-width="1.5"/></svg>
<div class="a" style="left:2233.0px;top:1035.0px;font-size:21.6px;line-height:21.6px;color:#666;font-weight:normal;letter-spacing:-1px">データがない目標値と達成率</div>
<svg class="a" style="left:2552px;top:1039px" width="22" height="17" viewBox="0 0 22 17"><path d="M2 8.5C4.2 4.8 7.2 3 11 3s6.8 1.8 9 5.5C17.8 12.2 14.8 14 11 14S4.2 12.2 2 8.5z" fill="none" stroke="#666" stroke-width="1.5"/><circle cx="11" cy="8.5" r="2.5" fill="none" stroke="#666" stroke-width="1.5"/></svg>
<div class="a" style="left:2579.0px;top:1035.0px;font-size:21.6px;line-height:21.6px;color:#666;font-weight:normal;">目標</div>
<svg class="a" style="left:2662px;top:1037px" width="21" height="21" viewBox="0 0 21 21"><path d="M10.5 1.5v12M5.5 9l5 5 5-5M1.5 12v7.5h18V12" fill="none" stroke="#666" stroke-width="1.5"/></svg>
<div class="a" style="left:2687.0px;top:1035.0px;font-size:21.6px;line-height:21.6px;color:#666;font-weight:normal;letter-spacing:-0.7px">エクスポート</div>
<svg class="a" style="left:2852px;top:1032px" width="26" height="26" viewBox="0 0 27 27"><g fill="none" stroke="#666" stroke-width="2.8" stroke-linecap="round" stroke-linejoin="round"><path d="M2 9V2h8M17 2h8v7M25 18v7h-8M10 25H2v-7"/><path d="M25 2l-8 8M2 25l8-8"/></g></svg>
<div class="a" style="left:475px;top:1098px;width:2406px;height:140px;background:#f6f7f9;border-top:1px solid #e1e2e6;border-right:1px solid #e1e2e6"></div>
<div class="a" style="left:475px;top:1098px;width:2392.5px;height:277.5px;overflow:hidden;border-left:1px solid #e1e2e6;border-top:1px solid #e1e2e6">
<div class="a" style="left:0;top:0;width:2500px;height:140px;background:#f8f8f9"></div>
<div class="a" style="left:0;top:69px;width:2500px;height:71px;background:#f5f6f8"></div>
<div class="a" style="left:328.4px;top:69px;width:2500px;height:1px;background:#e1e2e6"></div>
<div class="a" style="left:0;top:139px;width:2500px;height:1px;background:#e1e2e6"></div>
<div class="a" style="left:0;top:208.0px;width:2500px;height:1px;background:#f0f0f2"></div>
<div class="a" style="left:111.5px;top:0.0px;width:1px;height:277.5px;background:#e1e2e6"></div>
<div class="a" style="left:327.4px;top:0.0px;width:1px;height:277.5px;background:#e1e2e6"></div>
<div class="a" style="left:507.4px;top:70.0px;width:1px;height:277.5px;background:#e1e2e6"></div>
<div class="a" style="left:687.4px;top:0.0px;width:1px;height:277.5px;background:#e1e2e6"></div>
<div class="a" style="left:867.4px;top:70.0px;width:1px;height:277.5px;background:#e1e2e6"></div>
<div class="a" style="left:1047.4px;top:0.0px;width:1px;height:277.5px;background:#e1e2e6"></div>
<div class="a" style="left:1227.4px;top:70.0px;width:1px;height:277.5px;background:#e1e2e6"></div>
<div class="a" style="left:1407.4px;top:0.0px;width:1px;height:277.5px;background:#e1e2e6"></div>
<div class="a" style="left:1587.4px;top:70.0px;width:1px;height:277.5px;background:#e1e2e6"></div>
<div class="a" style="left:1767.4px;top:0.0px;width:1px;height:277.5px;background:#e1e2e6"></div>
<div class="a" style="left:1947.4px;top:70.0px;width:1px;height:277.5px;background:#e1e2e6"></div>
<div class="a" style="left:2127.4px;top:0.0px;width:1px;height:277.5px;background:#e1e2e6"></div>
<div class="a" style="left:2307.4px;top:70.0px;width:1px;height:277.5px;background:#e1e2e6"></div>
<div class="a" style="left:2487.4px;top:0.0px;width:1px;height:277.5px;background:#e1e2e6"></div>
<div class="a" style="left:31.0px;top:57.0px;font-size:25.2px;line-height:25.2px;color:#262626;font-weight:bold;">順位</div>
<div class="a" style="left:135.0px;top:57.0px;font-size:25.2px;line-height:25.2px;color:#262626;font-weight:bold;">営業担当</div>
<div class="a" style="left:328.4px;top:23.0px;width:360px;text-align:center;font-size:25.2px;line-height:25.2px;color:#262626;font-weight:bold">送信メール数</div>
<div class="a" style="left:328.4px;top:92.5px;width:147px;text-align:center;font-size:25.2px;line-height:25.2px;color:#666">実績</div>
<svg class="a" style="left:476.9px;top:95.0px" width="15" height="23" viewBox="0 0 15 23"><path d="M7.5 0.5l7 7.5H.5z" fill="#bdbdbd"/><path d="M7.5 22l7-7.5H.5z" fill="#bdbdbd"/></svg>
<div class="a" style="left:508.4px;top:92.5px;width:147px;text-align:center;font-size:25.2px;line-height:25.2px;color:#666">目標</div>
<svg class="a" style="left:656.9px;top:95.0px" width="15" height="23" viewBox="0 0 15 23"><path d="M7.5 0.5l7 7.5H.5z" fill="#bdbdbd"/><path d="M7.5 22l7-7.5H.5z" fill="#bdbdbd"/></svg>
<div class="a" style="left:688.4px;top:23.0px;width:360px;text-align:center;font-size:25.2px;line-height:25.2px;color:#262626;font-weight:bold">フォロー追加数</div>
<div class="a" style="left:688.4px;top:92.5px;width:147px;text-align:center;font-size:25.2px;line-height:25.2px;color:#666">実績</div>
<svg class="a" style="left:836.9px;top:95.0px" width="15" height="23" viewBox="0 0 15 23"><path d="M7.5 0.5l7 7.5H.5z" fill="#bdbdbd"/><path d="M7.5 22l7-7.5H.5z" fill="#bdbdbd"/></svg>
<div class="a" style="left:868.4px;top:92.5px;width:147px;text-align:center;font-size:25.2px;line-height:25.2px;color:#666">目標</div>
<svg class="a" style="left:1016.9px;top:95.0px" width="15" height="23" viewBox="0 0 15 23"><path d="M7.5 0.5l7 7.5H.5z" fill="#bdbdbd"/><path d="M7.5 22l7-7.5H.5z" fill="#bdbdbd"/></svg>
<div class="a" style="left:1048.4px;top:23.0px;width:360px;text-align:center;font-size:25.2px;line-height:25.2px;color:#262626;font-weight:bold">新規作成顧客数</div>
<div class="a" style="left:1048.4px;top:92.5px;width:147px;text-align:center;font-size:25.2px;line-height:25.2px;color:#666">実績</div>
<svg class="a" style="left:1196.9px;top:95.0px" width="15" height="23" viewBox="0 0 15 23"><path d="M7.5 0.5l7 7.5H.5z" fill="#bdbdbd"/><path d="M7.5 22l7-7.5H.5z" fill="#bdbdbd"/></svg>
<div class="a" style="left:1228.4px;top:92.5px;width:147px;text-align:center;font-size:25.2px;line-height:25.2px;color:#666">目標</div>
<svg class="a" style="left:1376.9px;top:95.0px" width="15" height="23" viewBox="0 0 15 23"><path d="M7.5 0.5l7 7.5H.5z" fill="#bdbdbd"/><path d="M7.5 22l7-7.5H.5z" fill="#bdbdbd"/></svg>
<div class="a" style="left:1408.4px;top:23.0px;width:360px;text-align:center;font-size:25.2px;line-height:25.2px;color:#262626;font-weight:bold">本日の新規営業メール送付数</div>
<div class="a" style="left:1408.4px;top:92.5px;width:147px;text-align:center;font-size:25.2px;line-height:25.2px;color:#666">実績</div>
<svg class="a" style="left:1556.9px;top:95.0px" width="15" height="23" viewBox="0 0 15 23"><path d="M7.5 0.5l7 7.5H.5z" fill="#bdbdbd"/><path d="M7.5 22l7-7.5H.5z" fill="#bdbdbd"/></svg>
<div class="a" style="left:1588.4px;top:92.5px;width:147px;text-align:center;font-size:25.2px;line-height:25.2px;color:#666">目標</div>
<svg class="a" style="left:1736.9px;top:95.0px" width="15" height="23" viewBox="0 0 15 23"><path d="M7.5 0.5l7 7.5H.5z" fill="#bdbdbd"/><path d="M7.5 22l7-7.5H.5z" fill="#bdbdbd"/></svg>
<div class="a" style="left:1768.4px;top:23.0px;width:360px;text-align:center;font-size:25.2px;line-height:25.2px;color:#262626;font-weight:bold">今週のバイヤーへの評価依...</div>
<div class="a" style="left:1768.4px;top:92.5px;width:147px;text-align:center;font-size:25.2px;line-height:25.2px;color:#666">実績</div>
<svg class="a" style="left:1916.9px;top:95.0px" width="15" height="23" viewBox="0 0 15 23"><path d="M7.5 0.5l7 7.5H.5z" fill="#bdbdbd"/><path d="M7.5 22l7-7.5H.5z" fill="#bdbdbd"/></svg>
<div class="a" style="left:1948.4px;top:92.5px;width:147px;text-align:center;font-size:25.2px;line-height:25.2px;color:#666">目標</div>
<svg class="a" style="left:2096.9px;top:95.0px" width="15" height="23" viewBox="0 0 15 23"><path d="M7.5 0.5l7 7.5H.5z" fill="#bdbdbd"/><path d="M7.5 22l7-7.5H.5z" fill="#bdbdbd"/></svg>
<div class="a" style="left:2128.4px;top:23.0px;width:360px;text-align:center;font-size:25.2px;line-height:25.2px;color:#262626;font-weight:bold">今週訪問した顧客数</div>
<div class="a" style="left:2128.4px;top:92.5px;width:147px;text-align:center;font-size:25.2px;line-height:25.2px;color:#666">実績</div>
<svg class="a" style="left:2276.9px;top:95.0px" width="15" height="23" viewBox="0 0 15 23"><path d="M7.5 0.5l7 7.5H.5z" fill="#bdbdbd"/><path d="M7.5 22l7-7.5H.5z" fill="#bdbdbd"/></svg>
<div class="a" style="left:2308.4px;top:92.5px;width:147px;text-align:center;font-size:25.2px;line-height:25.2px;color:#666">目標</div>
<svg class="a" style="left:2456.9px;top:95.0px" width="15" height="23" viewBox="0 0 15 23"><path d="M7.5 0.5l7 7.5H.5z" fill="#bdbdbd"/><path d="M7.5 22l7-7.5H.5z" fill="#bdbdbd"/></svg>
<svg class="a" style="left:44px;top:153.5px" width="24" height="31" viewBox="0 0 24 31"><path d="M4 0.5h16v11.5l-8 4.5-8-4.5z" fill="#3b6cc4"/><path d="M12 0.5h8v11.5l-8 4.5z" fill="#3563b8"/><rect x="3.3" y="0" width="17.4" height="1.8" fill="#f0c020"/><path d="M12 8.5l3.6 7.2 7.9 1.1-5.7 5.5 1.4 7.8L12 26.4l-7.2 3.7 1.4-7.8L.5 16.8l7.9-1.1z" fill="#f5c518"/><text x="12" y="23" text-anchor="middle" font-size="7" fill="#c99a00" font-family="Liberation Sans">1</text></svg>
<div class="a" style="left:127.0px;top:162.0px;font-size:25.2px;line-height:25.2px;color:#1a1a1a;font-weight:normal;">Okki Ariko</div>
<div class="a" style="left:343.4px;top:162.0px;font-size:25.2px;line-height:25.2px;color:#1a1a1a;font-weight:normal;">0</div>
<div class="a" style="left:523.4px;top:162.0px;font-size:25.2px;line-height:25.2px;color:#1a1a1a;font-weight:normal;">0</div>
<div class="a" style="left:703.4px;top:162.0px;font-size:25.2px;line-height:25.2px;color:#1a1a1a;font-weight:normal;">0</div>
<div class="a" style="left:883.4px;top:162.0px;font-size:25.2px;line-height:25.2px;color:#1a1a1a;font-weight:normal;">0</div>
<div class="a" style="left:1063.4px;top:162.0px;font-size:25.2px;line-height:25.2px;color:#1a1a1a;font-weight:normal;">0</div>
<div class="a" style="left:1243.4px;top:162.0px;font-size:25.2px;line-height:25.2px;color:#1a1a1a;font-weight:normal;">0</div>
<div class="a" style="left:1423.4px;top:162.0px;font-size:25.2px;line-height:25.2px;color:#1a1a1a;font-weight:normal;">0</div>
<div class="a" style="left:1603.4px;top:162.0px;font-size:25.2px;line-height:25.2px;color:#1a1a1a;font-weight:normal;">0</div>
<div class="a" style="left:1783.4px;top:162.0px;font-size:25.2px;line-height:25.2px;color:#1a1a1a;font-weight:normal;">0</div>
<div class="a" style="left:1963.4px;top:162.0px;font-size:25.2px;line-height:25.2px;color:#1a1a1a;font-weight:normal;">0</div>
<div class="a" style="left:2143.4px;top:162.0px;font-size:25.2px;line-height:25.2px;color:#1a1a1a;font-weight:normal;">0</div>
<div class="a" style="left:2323.4px;top:162.0px;font-size:25.2px;line-height:25.2px;color:#1a1a1a;font-weight:normal;">0</div>
<svg class="a" style="left:44px;top:222.5px" width="24" height="31" viewBox="0 0 24 31"><path d="M4 0.5h16v11.5l-8 4.5-8-4.5z" fill="#3b6cc4"/><path d="M12 0.5h8v11.5l-8 4.5z" fill="#3563b8"/><rect x="3.3" y="0" width="17.4" height="1.8" fill="#d8d8dc"/><path d="M12 8.5l3.6 7.2 7.9 1.1-5.7 5.5 1.4 7.8L12 26.4l-7.2 3.7 1.4-7.8L.5 16.8l7.9-1.1z" fill="#d5d6da"/><text x="12" y="23" text-anchor="middle" font-size="7" fill="#aaa" font-family="Liberation Sans">2</text></svg>
<div class="a" style="left:127.0px;top:231.0px;font-size:25.2px;line-height:25.2px;color:#1a1a1a;font-weight:normal;">DemoMainA...</div>
<div class="a" style="left:343.4px;top:231.0px;font-size:25.2px;line-height:25.2px;color:#1a1a1a;font-weight:normal;">0</div>
<div class="a" style="left:523.4px;top:231.0px;font-size:25.2px;line-height:25.2px;color:#1a1a1a;font-weight:normal;">0</div>
<div class="a" style="left:703.4px;top:231.0px;font-size:25.2px;line-height:25.2px;color:#1a1a1a;font-weight:normal;">0</div>
<div class="a" style="left:883.4px;top:231.0px;font-size:25.2px;line-height:25.2px;color:#1a1a1a;font-weight:normal;">0</div>
<div class="a" style="left:1063.4px;top:231.0px;font-size:25.2px;line-height:25.2px;color:#1a1a1a;font-weight:normal;">410</div>
<div class="a" style="left:1243.4px;top:231.0px;font-size:25.2px;line-height:25.2px;color:#1a1a1a;font-weight:normal;">0</div>
<div class="a" style="left:1423.4px;top:231.0px;font-size:25.2px;line-height:25.2px;color:#1a1a1a;font-weight:normal;">3</div>
<div class="a" style="left:1603.4px;top:231.0px;font-size:25.2px;line-height:25.2px;color:#1a1a1a;font-weight:normal;">0</div>
<div class="a" style="left:1783.4px;top:231.0px;font-size:25.2px;line-height:25.2px;color:#1a1a1a;font-weight:normal;">0</div>
<div class="a" style="left:1963.4px;top:231.0px;font-size:25.2px;line-height:25.2px;color:#1a1a1a;font-weight:normal;">0</div>
<div class="a" style="left:2143.4px;top:231.0px;font-size:25.2px;line-height:25.2px;color:#1a1a1a;font-weight:normal;">0</div>
<div class="a" style="left:2323.4px;top:231.0px;font-size:25.2px;line-height:25.2px;color:#1a1a1a;font-weight:normal;">0</div>
</div>
<div class="a" style="left:475.5px;top:1375.5px;width:2405px;height:10.5px;background:#ecedf0"></div>
<div class="a" style="left:476px;top:1376.5px;width:1230px;height:9.5px;border-radius:5px;background:#9ea2ab"></div>
<div class="a" style="left:2867.5px;top:1238.5px;width:13.5px;height:137.5px;background:#fff;border-right:1px solid #e1e2e6"></div>
<div class="a" style="left:2868px;top:1239px;width:13px;height:135px;border-radius:6.5px;background:#9ea2ab"></div>
<div class="a" style="left:2852px;top:1238.5px;width:15px;height:137px;background:linear-gradient(90deg,rgba(0,0,0,0),rgba(0,0,0,.05))"></div>
<div class="a" style="left:0;top:1595px;width:2940px;height:1px;background:#eceef1"></div>
<div class="a" style="left:130px;top:100px;width:2810px;height:1px;background:#e8e8ea"></div>
<script>(function(){var w=window.innerWidth;if(w&&Math.abs(w-2940)>2){document.documentElement.style.zoom=w/2940;}})();</script>
</body></html>
